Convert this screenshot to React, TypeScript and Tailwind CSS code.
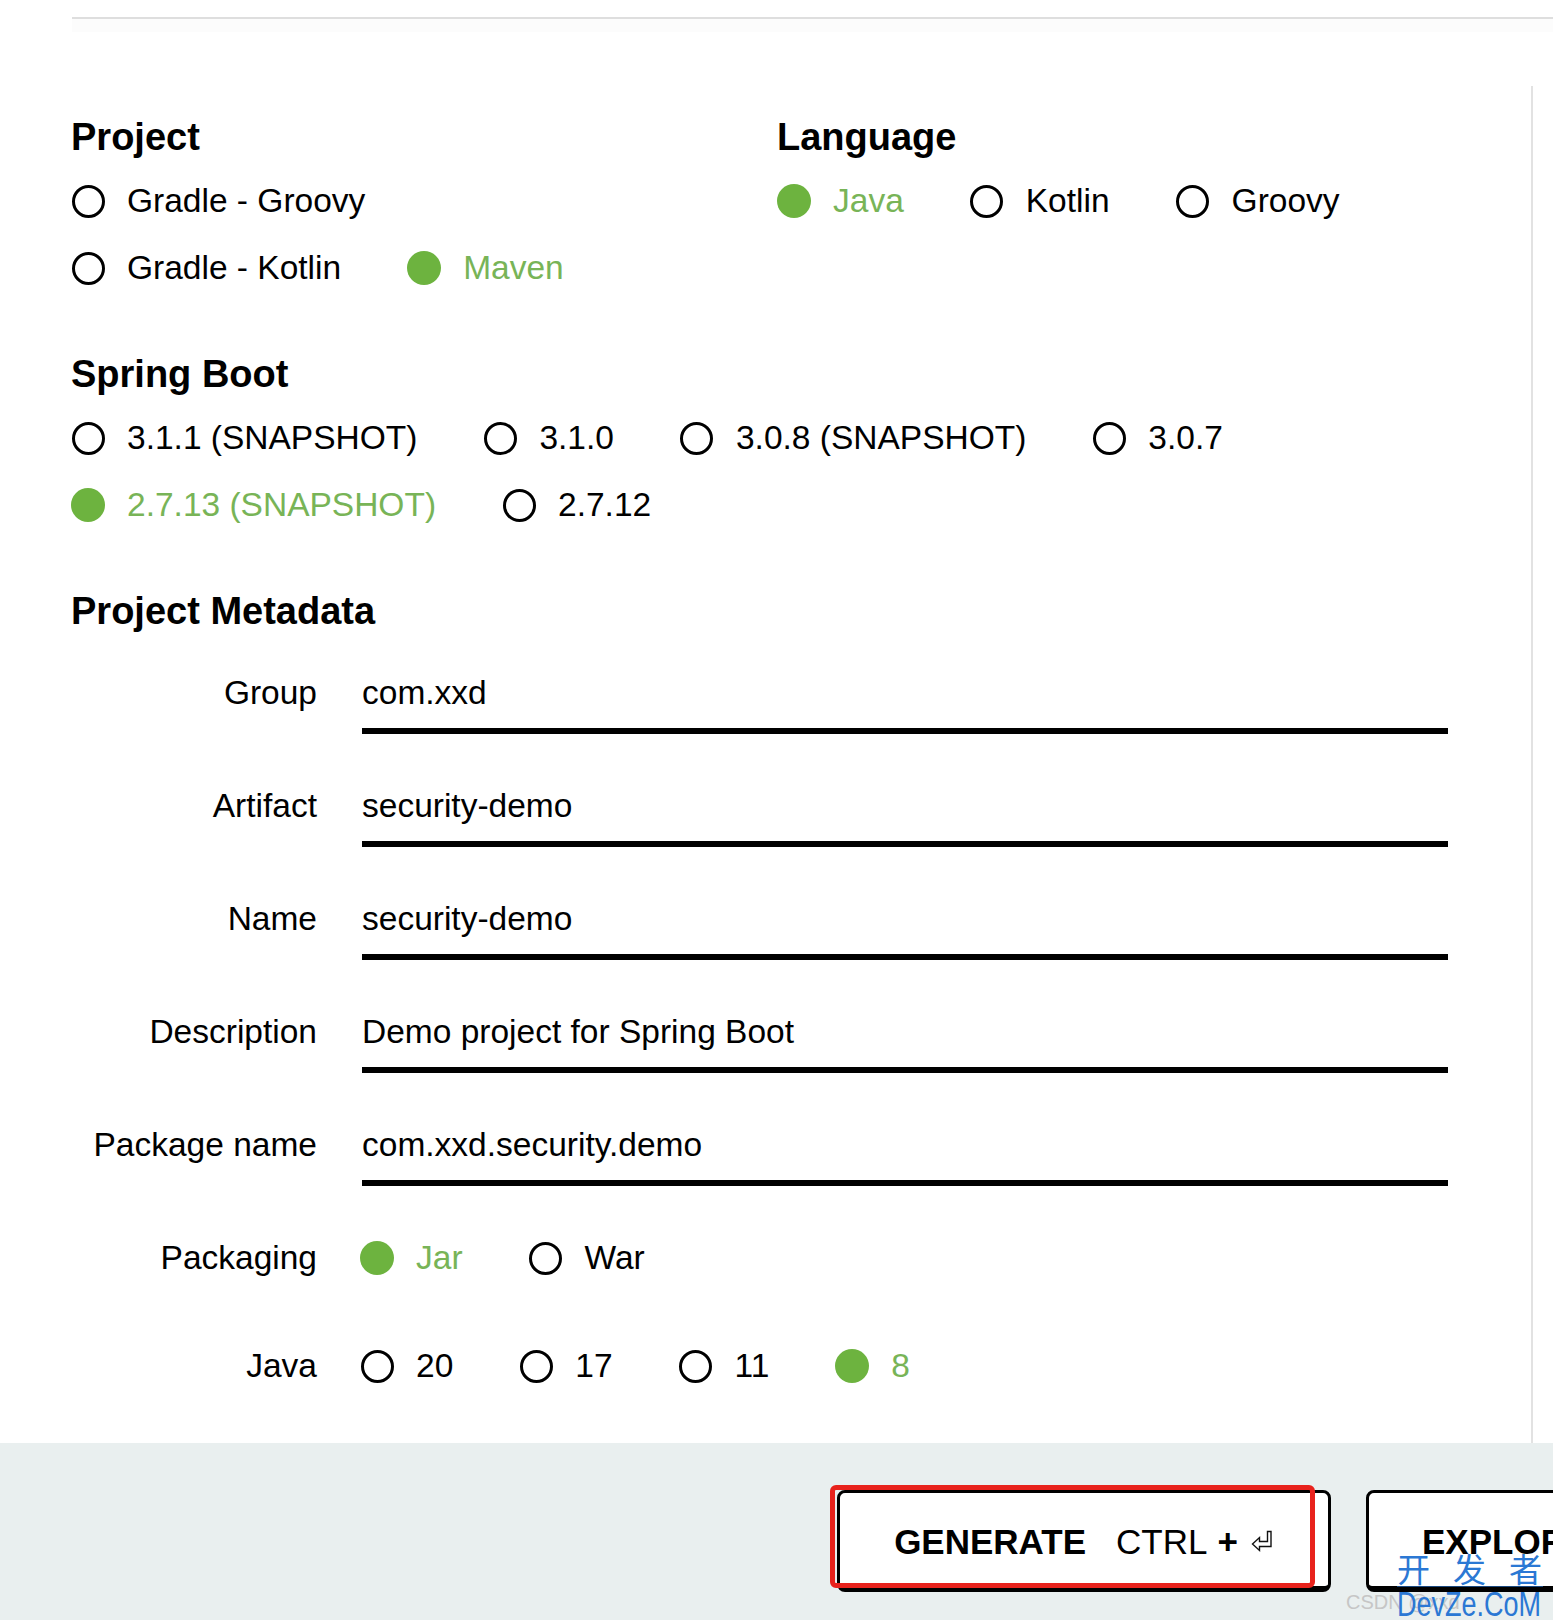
import React from "react";

type Opt = { label: string; checked?: boolean };

// ── Small pieces ───────────────────────────────────────────────────────────
function Radio({ label, checked }: Opt) {
  return (
    <div className="flex items-center h-[44px] gap-[22px] shrink-0">
      <span className="w-[34px] h-[34px] flex items-center justify-center shrink-0">
        {checked ? (
          <span className="w-[34px] h-[34px] rounded-full bg-[#6db33f]" />
        ) : (
          <span className="w-[33px] h-[33px] rounded-full border-[3.5px] border-black" />
        )}
      </span>
      <span className={`text-[33.5px] leading-[44px] whitespace-nowrap ${checked ? "text-[#78b457]" : "text-black"}`}>
        {label}
      </span>
    </div>
  );
}

function RadioRow({ items }: { items: Opt[] }) {
  return (
    <div className="flex gap-x-[66px]">
      {items.map((o) => (
        <Radio key={o.label} label={o.label} checked={o.checked} />
      ))}
    </div>
  );
}

function Heading({ children }: { children: React.ReactNode }) {
  return <h2 className="text-[38px] leading-[44px] font-bold text-black">{children}</h2>;
}

function Field({ label, value }: { label: string; value: string }) {
  return (
    <div className="flex items-start">
      <div className="w-[246px] text-right text-[33.5px] leading-[44px] text-black whitespace-nowrap">{label}</div>
      <div className="ml-[45px] w-[1086px] border-b-[6px] border-black pb-[13px] text-[33.5px] leading-[44px] text-black whitespace-nowrap">
        {value}
      </div>
    </div>
  );
}

function OptionField({ label, items }: { label: string; items: Opt[] }) {
  return (
    <div className="flex items-start">
      <div className="w-[246px] text-right text-[33.5px] leading-[44px] text-black whitespace-nowrap">{label}</div>
      <div className="ml-[43px]">
        <RadioRow items={items} />
      </div>
    </div>
  );
}

function ReturnIcon() {
  return (
    <svg width="24" height="24" viewBox="0 0 24 24" fill="none" stroke="#111" strokeWidth="1.4" strokeLinejoin="miter">
      <path d="M17.5 2.5 H21 V17.5 H9.5 V21.5 L2.5 15 L9.5 8.5 V12.5 H17.5 Z" />
    </svg>
  );
}

// ── Page ───────────────────────────────────────────────────────────────────
export default function App() {
  return (
    <div className="relative w-[1553px] h-[1620px] overflow-hidden bg-white text-black font-['Liberation_Sans',Arial,sans-serif]">
      {/* top rule */}
      <div className="pt-[17px]">
        <div className="ml-[72px] h-[2px] bg-[#dedede]" />
        <div className="ml-[72px] h-[13px] bg-[#fcfcfc]" />
      </div>

      {/* form */}
      <div className="mt-[54px] w-[1533px] h-[1357px] border-r-2 border-[#e2e2e2] pl-[71px] pt-[29px]">
        <div className="flex">
          <div className="w-[706px]">
            <Heading>Project</Heading>
            <div className="mt-[20px] flex flex-col gap-[23px]">
              <RadioRow items={[{ label: "Gradle - Groovy" }]} />
              <RadioRow items={[{ label: "Gradle - Kotlin" }, { label: "Maven", checked: true }]} />
            </div>
          </div>
          <div>
            <Heading>Language</Heading>
            <div className="mt-[20px]">
              <RadioRow items={[{ label: "Java", checked: true }, { label: "Kotlin" }, { label: "Groovy" }]} />
            </div>
          </div>
        </div>

        <div className="mt-[62px]">
          <Heading>Spring Boot</Heading>
          <div className="mt-[20px] flex flex-col gap-[23px]">
            <RadioRow
              items={[
                { label: "3.1.1 (SNAPSHOT)" },
                { label: "3.1.0" },
                { label: "3.0.8 (SNAPSHOT)" },
                { label: "3.0.7" },
              ]}
            />
            <RadioRow items={[{ label: "2.7.13 (SNAPSHOT)", checked: true }, { label: "2.7.12" }]} />
          </div>
        </div>

        <div className="mt-[62px]">
          <Heading>Project Metadata</Heading>
          <div className="mt-[38px] flex flex-col gap-[50px]">
            <Field label="Group" value="com.xxd" />
            <Field label="Artifact" value="security-demo" />
            <Field label="Name" value="security-demo" />
            <Field label="Description" value="Demo project for Spring Boot" />
            <Field label="Package name" value="com.xxd.security.demo" />
          </div>
          <div className="mt-[50px]">
            <OptionField label="Packaging" items={[{ label: "Jar", checked: true }, { label: "War" }]} />
          </div>
          <div className="mt-[64px]">
            <OptionField
              label="Java"
              items={[{ label: "20" }, { label: "17" }, { label: "11" }, { label: "8", checked: true }]}
            />
          </div>
        </div>
      </div>

      {/* footer actions */}
      <div className="h-[177px] bg-[#e9efef] pt-[47px] pl-[837px] flex items-start gap-[35px]">
        <div className="relative w-[494px] h-[102px] shrink-0 rounded-[8px] border-[3px] border-b-[6px] border-black bg-white pt-[3px] flex items-center justify-center">
          <span className="text-[35px] font-bold leading-none">GENERATE</span>
          <span className="ml-[30px] text-[35px] leading-none">CTRL</span>
          <span className="ml-[10px] text-[35px] font-bold leading-none">+</span>
          <span className="ml-[12px] flex items-center">
            <ReturnIcon />
          </span>
          <div className="absolute left-[-10px] top-[-8px] w-[485px] h-[103px] rounded-[6px] border-[5px] border-[#e8221c]" />
        </div>
        <div className="w-[400px] h-[102px] shrink-0 rounded-[8px] border-[3px] border-b-[6px] border-black bg-white pl-[53px] pt-[3px] flex items-center">
          <span className="text-[35px] font-bold leading-none">EXPLORE</span>
        </div>
      </div>

      {/* watermark */}
      <div className="absolute left-[1346px] top-[1590px] text-[20px] leading-[24px] text-[#c6c6c6] whitespace-nowrap">
        CSDN @xxd
      </div>
      <div className="absolute left-[1397px] top-[1550px] w-[150px] text-[#2b78d4]">
        <div className="text-[33px] leading-[36px] tracking-[23px] whitespace-nowrap font-['Noto_Sans_CJK_SC',sans-serif]">
          开发者
        </div>
        <div className="h-px w-[146px] bg-[#2b78d4]/60" />
        <div className="text-[27px] leading-[26px] whitespace-nowrap origin-top-left scale-y-[1.3]">
          DevZe.CoM
        </div>
      </div>
    </div>
  );
}
